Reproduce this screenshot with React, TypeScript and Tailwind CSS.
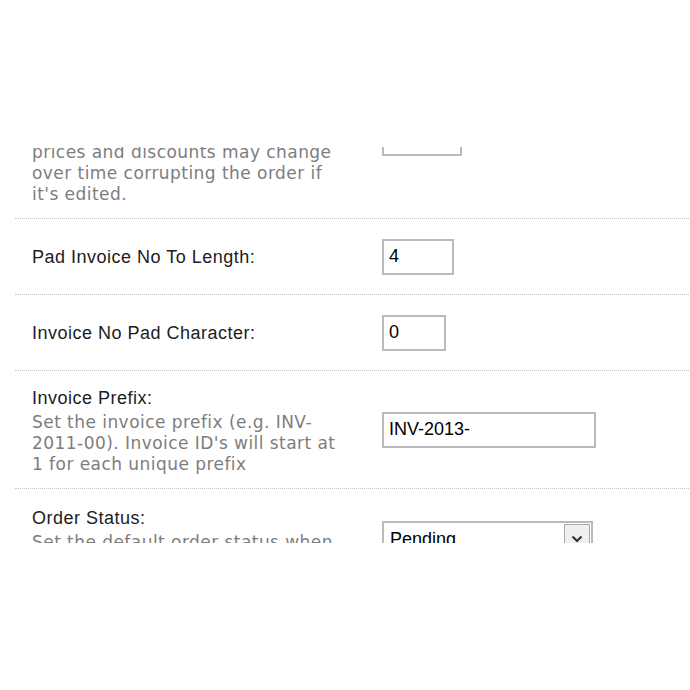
import type { ReactNode } from "react";

const label = "font-['Liberation_Sans',Arial,sans-serif] text-[18px] leading-[28px] tracking-[0.5px] text-[#1c1c1c]";
const desc = "font-['DejaVu_Sans',Verdana,sans-serif] text-[17px] leading-[21px] tracking-[0.45px] text-[#7d7d7d]";
const field = "h-[36px] border-2 border-[#b9b9c1] bg-white px-[5px] font-['Liberation_Sans',Arial,sans-serif] text-[18px] text-black outline-none";

const TextField = ({ value, width }: { value: string; width: string }) => (
    <input readOnly defaultValue={value} className={`${field} ${width}`} />
);

const StatusSelect = () => (
    <div className="flex h-[36px] w-[211px] items-stretch border-2 border-[#b9b9c1] bg-white">
        <span className="flex-1 pl-[6px] font-['Liberation_Sans',Arial,sans-serif] text-[18px] leading-[32px] text-black">
            Pending
        </span>
        <span className="my-px mr-px flex w-[26px] items-center justify-center border border-[#a8a8a8] bg-[#efefef]">
            <svg width="12" height="8" viewBox="0 0 12 8">
                <path d="M1.5 1.5 6 6l4.5-4.5" fill="none" stroke="#333" strokeWidth="2.2" />
            </svg>
        </span>
    </div>
);

type Row = {
    title: string;
    lines: string[];
    height: string;
    control: ReactNode;
};

const rows: Row[] = [
    {
        title: "Store Product Details:",
        lines: [
            "Copy product details into each",
            "order when it is placed, otherwise",
            "prices and discounts may change",
            "over time corrupting the order if",
            "it's edited.",
        ],
        height: "h-[161px]",
        control: <TextField value="" width="w-[80px]" />,
    },
    {
        title: "Pad Invoice No To Length:",
        lines: [],
        height: "h-[76px]",
        control: <TextField value="4" width="w-[72px]" />,
    },
    {
        title: "Invoice No Pad Character:",
        lines: [],
        height: "h-[76px]",
        control: <TextField value="0" width="w-[64px]" />,
    },
    {
        title: "Invoice Prefix:",
        lines: [
            "Set the invoice prefix (e.g. INV-",
            "2011-00). Invoice ID's will start at",
            "1 for each unique prefix",
        ],
        height: "h-[118px]",
        control: <TextField value="INV-2013-" width="w-[214px]" />,
    },
    {
        title: "Order Status:",
        lines: ["Set the default order status when", "new orders are created."],
        height: "h-[100px]",
        control: <StatusSelect />,
    },
];

const App = () => {
    return (
        <div className="h-[690px] w-[690px] overflow-hidden bg-white">
            <div className="mt-[147px] h-[396px] overflow-hidden">
                <div className="-mt-[89px] ml-[15px] w-[700px]">
                    {rows.map((r, i) => (
                        <div
                            key={i}
                            className={`flex items-center border-b border-dotted border-[#c4c4c4] ${r.height}`}
                        >
                            <div className="w-[367px] pl-[17px]">
                                <div className={label}>{r.title}</div>
                                {r.lines.map((l, j) => (
                                    <div key={j} className={`${desc} whitespace-nowrap`}>
                                        {l}
                                    </div>
                                ))}
                            </div>
                            <div>{r.control}</div>
                        </div>
                    ))}
                </div>
            </div>
        </div>
    );
};

export default App;
